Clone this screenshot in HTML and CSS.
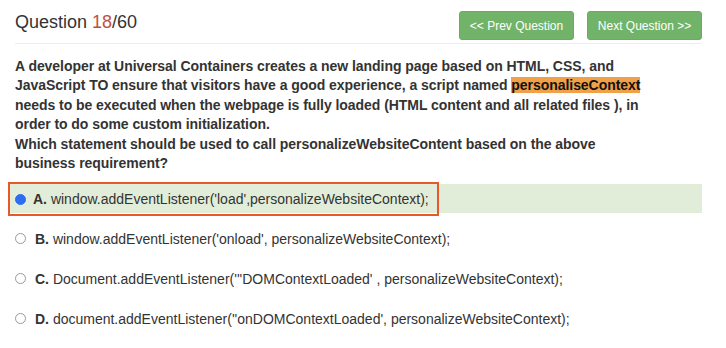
FILE: index.html
```html
<!DOCTYPE html>
<html>
<head>
<meta charset="utf-8">
<link rel="stylesheet" href="styles.css">
</head>
<body>
<div class="page">
  <div class="header">
    <h1 class="title">Question <span class="num">18</span>/60</h1>
    <div class="nav">
      <button class="btn">&lt;&lt; Prev Question</button>
      <button class="btn">Next Question &gt;&gt;</button>
    </div>
  </div>
  <p class="question">A developer at Universal Containers creates a new landing page based on HTML, CSS, and JavaScript TO ensure that visitors have a good experience, a script named <span class="hl">personaliseContext</span> needs to be executed when the webpage is fully loaded (HTML content and all related files ), in order to do some custom initialization.<br>Which statement should be used to call personalizeWebsiteContent based on the above business requirement?</p>
  <ul class="options">
    <li class="opt correct">
      <span class="mark"><span class="radio checked"></span><span class="txt"><b>A.</b> window.addEventListener('load',personalizeWebsiteContext);</span></span>
    </li>
    <li class="opt"><span class="radio"></span><span class="txt"><b>B.</b> window.addEventListener('onload', personalizeWebsiteContext);</span></li>
    <li class="opt"><span class="radio"></span><span class="txt"><b>C.</b> Document.addEventListener('''DOMContextLoaded' , personalizeWebsiteContext);</span></li>
    <li class="opt"><span class="radio"></span><span class="txt"><b>D.</b> document.addEventListener(''onDOMContextLoaded', personalizeWebsiteContext);</span></li>
  </ul>
</div>
</body>
</html>
```
FILE: styles.css
```css
html, body { margin: 0; padding: 0; background: #fff; }
body { font-family: "Liberation Sans", Arial, Helvetica, sans-serif; color: #333; }
.page { padding: 0 24px 0 15px; }
.header {
  display: flex; justify-content: space-between; align-items: flex-start;
  height: 43px; border-bottom: 1px solid #eeeeee;
}
.title { margin: 12px 0 0; font-size: 18px; font-weight: normal; color: #333; line-height: 21px; }
.num { color: #c0503e; }
.nav { display: flex; gap: 13px; padding-top: 11px; }
.btn {
  width: 115px; height: 29px; border: 1px solid #6aad62; border-radius: 3px;
  background: #72b36a; color: #fff; font-family: inherit; font-size: 12px; padding: 0;
}
.question {
  margin: 12.5px 0 0; max-width: 626px; font-size: 14px; font-weight: bold;
  letter-spacing: -0.05px; line-height: 19.5px; color: #333;
}
.hl { background: #f0a048; color: #111; }
.options { list-style: none; margin: 10.5px 0 0; padding: 0; }
.opt { display: flex; align-items: center; height: 29px; margin-bottom: 11px; font-size: 14px; color: #333; }
.correct { background: #e2edd9; margin-left: -5px; }
.mark {
  display: flex; align-items: center; border: 2px solid #e8582b;
  margin: -2px 0 -3px -2px; height: 30px; padding: 0 8px 0 5px;
}
.radio {
  width: 9px; height: 9px; border: 1px solid #999; border-radius: 50%;
  background: #fff; flex: none; margin-right: 9px; box-sizing: content-box;
}
.mark .radio { margin-right: 7px; }
.radio.checked { border-color: #2f6df0; background: #2f6df0; }
.txt b { font-weight: bold; }
```
